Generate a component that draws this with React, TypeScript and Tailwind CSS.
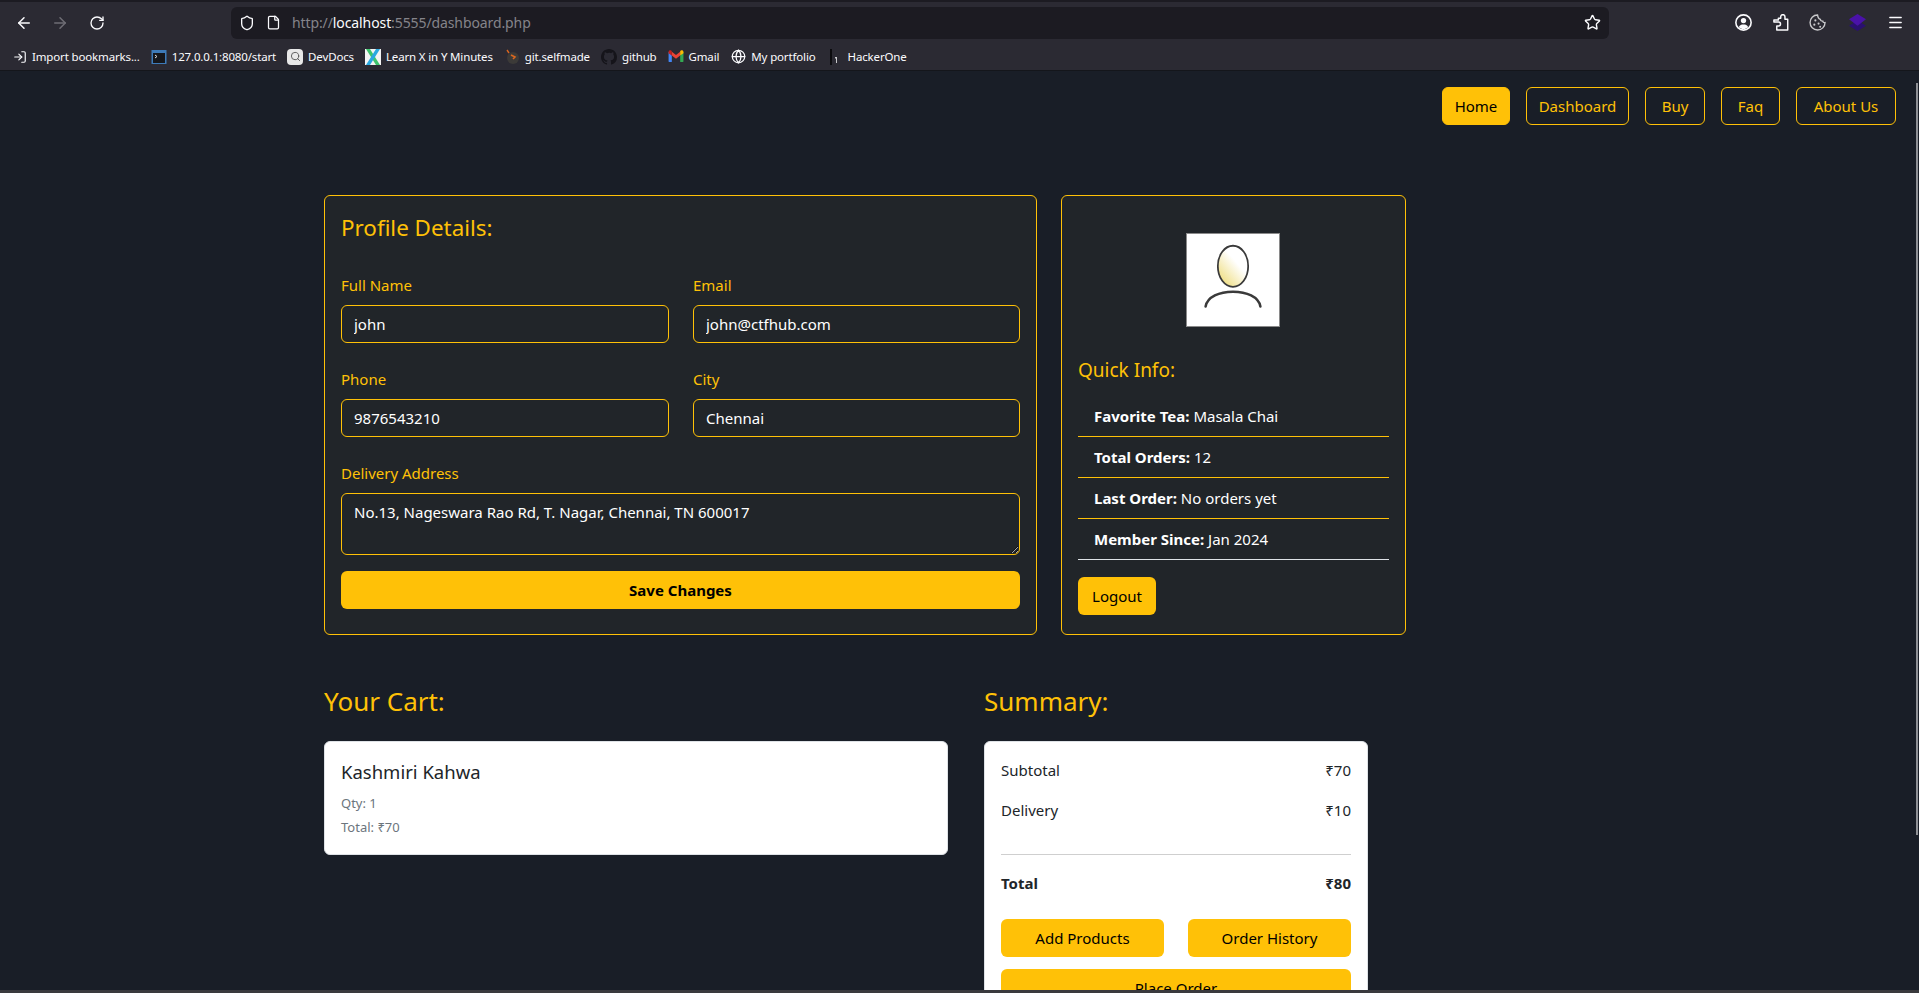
import { ArrowLeft, ArrowRight, RotateCw, Shield, File, Star, Menu, LogIn, Globe, Search } from 'lucide-react';
import type { ReactNode } from 'react';

const font = "font-['Noto_Sans','Open_Sans',sans-serif]";

function Field({ label, value, width }: { label: string; value: string; width: string }) {
  return (
    <div className={width}>
      <div className="h-[22px] text-[15px] leading-[22px] text-[#ffc107]">{label}</div>
      <input
        readOnly
        value={value}
        className="mt-[9px] block h-[38px] w-full rounded-md border border-[#ffc107] bg-[#212529] px-3 text-[15px] text-white outline-none"
      />
    </div>
  );
}

function InfoRow({ label, value, border }: { label: string; value: string; border: string }) {
  return (
    <li className={`h-[41px] border-b px-4 pt-[8px] text-[15px] leading-[24px] text-white ${border}`}>
      <span className="font-bold">{label}</span> {value}
    </li>
  );
}

function Bookmark({ icon, label, narrow }: { icon: ReactNode; label: string; narrow?: boolean }) {
  return (
    <div className="flex items-center gap-[5px]">
      <span className={`flex h-4 items-center justify-center ${narrow ? 'w-[14px]' : 'w-4'}`}>{icon}</span>
      <span className="text-[11.5px] tracking-[-0.15px] text-[#fbfbfe]">{label}</span>
    </div>
  );
}

function NavLink({ label, width, active }: { label: string; width: string; active?: boolean }) {
  return (
    <a className={`flex h-[38px] items-center justify-center rounded-md border border-[#ffc107] text-[15px] ${width} ${active ? 'bg-[#ffc107] text-black' : 'text-[#ffc107]'}`}>
      {label}
    </a>
  );
}

export default function App() {
  return (
    <div className={`flex h-[993px] w-[1919px] flex-col overflow-hidden bg-[#191e27] ${font}`}>
      {/* Browser chrome */}
      <div className="h-[71px] shrink-0 border-b border-[#14161b] bg-[#2b2a33]">
        <div className="h-[2px] bg-[#1c1b22]" />
        <div className="flex h-[41px] items-center pl-[15px] pr-[15px]">
          <ArrowLeft size={18} className="text-[#fbfbfe]" />
          <ArrowRight size={18} className="ml-[18px] text-[#6f6e75]" />
          <RotateCw size={16} className="ml-[20px] text-[#fbfbfe]" />
          <div className="ml-[126px] flex h-[32px] w-[1378px] items-center rounded-md bg-[#1c1b22] pl-[8px] pr-[8px]">
            <Shield size={16} className="text-[#fbfbfe]" />
            <File size={15} className="ml-[11px] text-[#fbfbfe]" />
            <span className="ml-[11px] text-[14px] tracking-[-0.1px] text-[#85848a]">
              http://<span className="text-[#fbfbfe]">localhost</span>:5555/dashboard.php
            </span>
            <Star size={17} className="ml-auto text-[#fbfbfe]" />
          </div>
          <svg viewBox="0 0 16 16" className="ml-[126px] h-[17px] w-[17px]" fill="none">
            <circle cx="8" cy="8" r="7.2" stroke="#fbfbfe" strokeWidth="1.5" />
            <circle cx="8" cy="6.2" r="2.5" fill="#fbfbfe" />
            <path d="M3.6 12.2C4.6 10.4 6 9.9 8 9.9s3.4.5 4.4 2.3C11.2 13.6 9.7 14.2 8 14.2s-3.2-.6-4.4-2Z" fill="#fbfbfe" />
          </svg>
          <svg viewBox="0 0 16 16" className="ml-[20px] h-[17px] w-[17px]" fill="none" stroke="#fbfbfe" strokeWidth="1.4" strokeLinejoin="round">
            <path d="M6 4H8.2V2.6a2 2 0 0 1 4 0V5h2.6v10H4.5v-3.8H6.2a1.8 1.8 0 0 0 0-3.6H1.8V5.6H6Z" />
          </svg>
          <svg viewBox="0 0 16 16" className="ml-[20px] h-[17px] w-[17px]" fill="none">
            <path d="M8 .9C4 .9 1 4.1 1 8s3.1 7.1 7 7.1 7.1-3.1 7.1-7c-1 .2-2-.4-2.2-1.4-1 .2-2.1-.5-2.2-1.6C9.6 4.9 8.3 3 8 .9Z" stroke="#c9c9cc" strokeWidth="1.3" />
            <circle cx="6" cy="6" r="1" fill="#c9c9cc" />
            <circle cx="5" cy="10" r="1" fill="#c9c9cc" />
            <circle cx="9" cy="9" r="1" fill="#c9c9cc" />
            <circle cx="10.5" cy="12" r="0.9" fill="#c9c9cc" />
          </svg>
          <svg viewBox="0 0 16 16" className="ml-[23px] h-[17px] w-[17px]">
            <path d="M8 6 16 11 8 16 0 11Z" fill="#2a1070" />
            <path d="M8 0 16 5 8 11 0 5Z" fill="#4a12a8" />
          </svg>
          <Menu size={17} className="ml-[21px] text-[#fbfbfe]" />
        </div>
        <div className="flex h-[27px] items-center gap-[11px] pl-[13px]">
          <Bookmark narrow icon={<LogIn size={14} className="text-[#fbfbfe]" />} label="Import bookmarks..." />
          <Bookmark
            icon={
              <svg viewBox="0 0 16 16" className="h-4 w-4">
                <rect x="0.5" y="1" width="15" height="14" fill="#3d7ab8" />
                <rect x="2" y="4" width="12" height="10" fill="#15171c" />
                <path d="M4 6l2 1.5L4 9" stroke="#ddd" fill="none" />
              </svg>
            }
            label="127.0.0.1:8080/start"
          />
          <Bookmark
            icon={
              <span className="flex h-4 w-4 items-center justify-center rounded-sm bg-[#e8e8e8]">
                <Search size={11} className="text-[#555]" />
              </span>
            }
            label="DevDocs"
          />
          <Bookmark
            icon={
              <svg viewBox="0 0 16 16" className="h-4 w-4">
                <rect width="16" height="16" fill="#f4f4f4" />
                <path d="M1 0h4l10 16h-4Z" fill="#3ec46d" />
                <path d="M15 0h-4L1 16h4Z" fill="#29a8e0" />
              </svg>
            }
            label="Learn X in Y Minutes"
          />
          <Bookmark
            icon={
              <svg viewBox="0 0 16 16" className="h-4 w-4">
                <circle cx="9" cy="9" r="6" fill="#3c3a38" />
                <path d="M7 6l4 2-2 2" stroke="#d9661f" strokeWidth="1.6" fill="none" />
                <path d="M3 1l2 3" stroke="#d9661f" strokeWidth="1.4" />
              </svg>
            }
            label="git.selfmade"
          />
          <Bookmark
            icon={
              <svg viewBox="0 0 16 16" className="h-4 w-4" fill="#15141a">
                <path d="M8 0C3.58 0 0 3.58 0 8c0 3.54 2.29 6.53 5.47 7.59.4.07.55-.17.55-.38v-1.34c-2.23.48-2.7-1.07-2.7-1.07-.36-.93-.89-1.17-.89-1.17-.73-.5.05-.49.05-.49.8.06 1.23.83 1.23.83.71 1.23 1.87.87 2.33.66.07-.52.28-.87.5-1.07-1.78-.2-3.64-.89-3.64-3.95 0-.87.31-1.59.82-2.15-.08-.2-.36-1.02.08-2.12 0 0 .67-.21 2.2.82A7.6 7.6 0 0 1 8 3.87c.68 0 1.36.09 2 .27 1.53-1.04 2.2-.82 2.2-.82.44 1.1.16 1.92.08 2.12.51.56.82 1.27.82 2.15 0 3.07-1.87 3.75-3.65 3.95.29.25.54.73.54 1.48v2.19c0 .21.15.46.55.38A8 8 0 0 0 16 8c0-4.42-3.58-8-8-8Z" />
              </svg>
            }
            label="github"
          />
          <Bookmark
            icon={
              <svg viewBox="0 0 16 14" className="h-[13px] w-4">
                <path d="M0 2v10a1 1 0 0 0 1 1h2.5V6Z" fill="#4285f4" />
                <path d="M16 2v10a1 1 0 0 1-1 1h-2.5V6Z" fill="#34a853" />
                <path d="M3.5 6 8 9.5 12.5 6V2L8 5.5 3.5 2Z" fill="#ea4335" />
                <path d="M0 2c0-1.5 1.7-2.2 2.7-1.4l.8.6v4.8L0 3.5Z" fill="#c5221f" />
                <path d="M16 2c0-1.5-1.7-2.2-2.7-1.4l-.8.6v4.8L16 3.5Z" fill="#fbbc04" />
              </svg>
            }
            label="Gmail"
          />
          <Bookmark icon={<Globe size={15} className="text-[#fbfbfe]" />} label="My portfolio" />
          <Bookmark
            icon={
              <svg viewBox="0 0 16 16" className="h-4 w-4">
                <rect x="3" y="0" width="2" height="16" fill="#0b0b0e" />
                <path d="M8 8h2v6H9V9.5H8Z" fill="#c9c9cc" />
              </svg>
            }
            label="HackerOne"
          />
        </div>
      </div>

      {/* Page */}
      <div className="relative flex-1 overflow-hidden">
        <nav className="flex justify-end gap-4 pr-[23px] pt-[16px]">
          <NavLink label="Home" width="w-[68px]" active />
          <NavLink label="Dashboard" width="w-[103px]" />
          <NavLink label="Buy" width="w-[60px]" />
          <NavLink label="Faq" width="w-[59px]" />
          <NavLink label="About Us" width="w-[100px]" />
        </nav>

        <div className="ml-[324px] mt-[70px] flex gap-[24px]">
          <section className="h-[440px] w-[713px] rounded-md border border-[#ffc107] bg-[#212529] px-[16px] pt-[15px]">
            <h4 className="h-[34px] text-[22.4px] leading-[34px] text-[#ffc107]">Profile Details:</h4>
            <div className="mt-[29px] grid grid-cols-[328px_327px] gap-x-[24px] gap-y-[25px]">
              <Field label="Full Name" value="john" width="w-[328px]" />
              <Field label="Email" value="john@ctfhub.com" width="w-[327px]" />
              <Field label="Phone" value="9876543210" width="w-[328px]" />
              <Field label="City" value="Chennai" width="w-[327px]" />
            </div>
            <div className="mt-[25px] h-[22px] text-[15px] leading-[22px] text-[#ffc107]">Delivery Address</div>
            <textarea
              readOnly
              value="No.13, Nageswara Rao Rd, T. Nagar, Chennai, TN 600017"
              className="mt-[9px] block h-[62px] w-[679px] rounded-md border border-[#ffc107] bg-[#212529] px-3 py-[6px] text-[15px] leading-[24px] text-white outline-none"
            />
            <button className="mt-[16px] h-[38px] w-[679px] rounded-md bg-[#ffc107] text-[15px] font-bold text-black">Save Changes</button>
          </section>

          <section className="h-[440px] w-[345px] rounded-md border border-[#ffc107] bg-[#212529] px-[16px] pt-[37px]">
            <div className="ml-[108px] h-[94px] w-[94px] border border-[#8a8a8a] bg-white">
              <svg viewBox="0 0 94 94" className="h-full w-full">
                <defs>
                  <linearGradient id="face" x1="0.8" y1="0.2" x2="0.2" y2="0.9">
                    <stop offset="0.3" stopColor="#ffffff" />
                    <stop offset="1" stopColor="#f0e08a" />
                  </linearGradient>
                </defs>
                <ellipse cx="47" cy="33" rx="15.5" ry="21" fill="url(#face)" stroke="#3a3a3a" strokeWidth="1.8" />
                <path d="M19 74C21 64 33 59 47 59S73 64 75 74" fill="none" stroke="#3a3a3a" strokeWidth="2.6" strokeLinecap="round" />
              </svg>
            </div>
            <h5 className="mt-[31px] h-[24px] text-[19px] leading-[24px] text-[#ffc107]">Quick Info:</h5>
            <ul className="mt-[14px]">
              <InfoRow label="Favorite Tea:" value="Masala Chai" border="border-[#ffc107]" />
              <InfoRow label="Total Orders:" value="12" border="border-[#ffc107]" />
              <InfoRow label="Last Order:" value="No orders yet" border="border-[#ffc107]" />
              <InfoRow label="Member Since:" value="Jan 2024" border="border-[#dee2e6]" />
            </ul>
            <button className="mt-[17px] h-[38px] w-[78px] rounded-md bg-[#ffc107] text-[15px] text-black">Logout</button>
          </section>
        </div>

        <div className="ml-[324px] mt-[47px] flex gap-[36px]">
          <div className="w-[624px]">
            <h3 className="h-[38px] text-[26px] leading-[38px] text-[#ffc107]">Your Cart:</h3>
            <div className="mt-[21px] h-[114px] rounded-md border border-[#dee2e6] bg-white px-[16px] pt-[16px]">
              <div className="h-[28px] text-[18.5px] leading-[28px] text-[#212529]">Kashmiri Kahwa</div>
              <div className="mt-[7px] h-[21px] text-[13px] leading-[21px] text-[#6c757d]">Qty: 1</div>
              <div className="mt-[3px] h-[21px] text-[13px] leading-[21px] text-[#6c757d]">Total: ₹70</div>
            </div>
          </div>
          <div className="w-[384px]">
            <h3 className="h-[38px] text-[26px] leading-[38px] text-[#ffc107]">Summary:</h3>
            <div className="mt-[21px] rounded-md border border-[#dee2e6] bg-white px-[16px] pt-[16px]">
              <div className="flex h-[24px] justify-between text-[15px] leading-[24px] text-[#212529]">
                <span>Subtotal</span>
                <span>₹70</span>
              </div>
              <div className="mt-[16px] flex h-[24px] justify-between text-[15px] leading-[24px] text-[#212529]">
                <span>Delivery</span>
                <span>₹10</span>
              </div>
              <hr className="mt-[32px] border-[#cfcfcf]" />
              <div className="mt-[16px] flex h-[24px] justify-between text-[15px] font-bold leading-[24px] text-[#212529]">
                <span>Total</span>
                <span>₹80</span>
              </div>
              <div className="mt-[24px] flex gap-[24px]">
                <button className="h-[38px] flex-1 rounded-md bg-[#ffc107] text-[15px] text-black">Add Products</button>
                <button className="h-[38px] flex-1 rounded-md bg-[#ffc107] text-[15px] text-black">Order History</button>
              </div>
              <button className="mt-[12px] h-[38px] w-full rounded-md bg-[#ffc107] text-[15px] text-black">Place Order</button>
            </div>
          </div>
        </div>

        {/* overlay scrollbar and window edge */}
        <div className="absolute right-[1px] top-[12px] h-[752px] w-[2px] bg-[#8f9196]" />
        <div className="absolute bottom-0 left-0 right-0 h-[3px] bg-[#3a3a3d]" />
      </div>
    </div>
  );
}
